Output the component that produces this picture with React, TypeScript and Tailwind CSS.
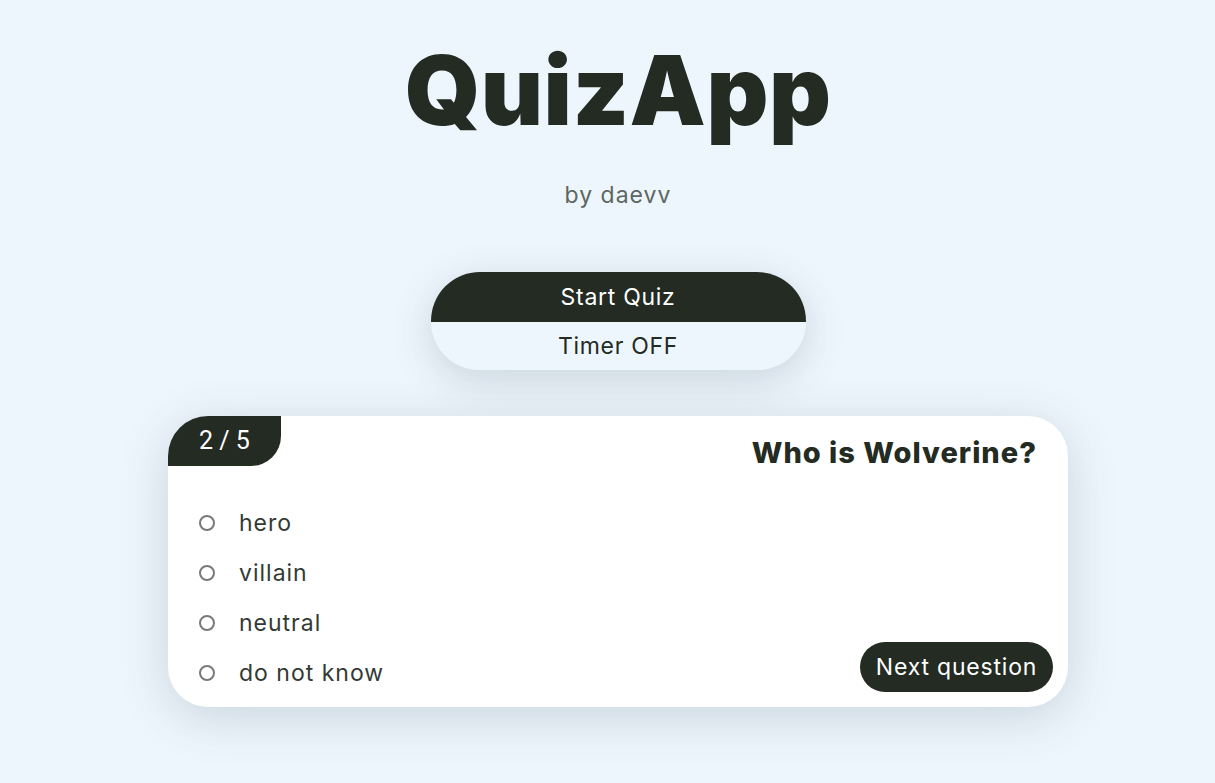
import { useState } from 'react'

const options = ['hero', 'villain', 'neutral', 'do not know']

export default function App() {
  const [selected, setSelected] = useState<string | null>(null)
  const [timer, setTimer] = useState(false)

  return (
    <div className="min-h-screen bg-[#eef6fd] font-['Inter',sans-serif] text-[#232b22] flex flex-col items-center pl-[21px]">
      <h1 className="mt-[30px] text-[96px] leading-[120px] font-black tracking-[0.5px]">QuizApp</h1>
      <p className="mt-[30px] text-[23px] leading-[30px] tracking-[1px] text-[#5d6660]">by daevv</p>

      {/* Controls */}
      <div className="mt-[62px] w-[375px] rounded-[50px] overflow-hidden shadow-[0_10px_40px_rgba(40,60,70,0.18)]">
        <button className="w-full h-[50px] bg-[#232b22] text-white text-[23px] tracking-[0.7px]">Start Quiz</button>
        <button
          onClick={() => setTimer(!timer)}
          className="w-full h-[48px] bg-[#eef6fd] text-[#232b22] text-[23px] tracking-[0.7px]"
        >
          Timer {timer ? 'ON' : 'OFF'}
        </button>
      </div>

      {/* Question card */}
      <div className="mt-[46px] w-[900px] h-[291px] bg-white rounded-[40px] shadow-[0_10px_50px_rgba(40,60,70,0.18)] overflow-hidden flex flex-col">
        <div className="flex justify-between items-start">
          <div className="w-[113px] h-[50px] bg-[#232b22] text-white rounded-br-[30px] flex items-center justify-center font-['Roboto',sans-serif] text-[25px]">
            2 / 5
          </div>
          <h2 className="mt-[19px] mr-[31px] text-[29px] leading-[36px] font-extrabold tracking-[1px]">Who is Wolverine?</h2>
        </div>
        <div className="flex justify-between items-end pl-[31px] pr-[15px] mt-[27px]">
          <div className="flex flex-col">
            {options.map((o) => (
              <label key={o} className="flex items-center h-[50px] gap-[24px] cursor-pointer text-[23px] tracking-[1px] text-[#333a34]">
                <input
                  type="radio"
                  name="answer"
                  checked={selected === o}
                  onChange={() => setSelected(o)}
                  className="w-[16px] h-[16px] shrink-0 appearance-none rounded-full border-2 border-[#777b78] checked:bg-[#232b22]"
                />
                {o}
              </label>
            ))}
          </div>
          <button className="mb-[6px] h-[50px] w-[193px] rounded-full bg-[#232b22] text-white text-[23px] tracking-[0.8px]">
            Next question
          </button>
        </div>
      </div>
    </div>
  )
}
